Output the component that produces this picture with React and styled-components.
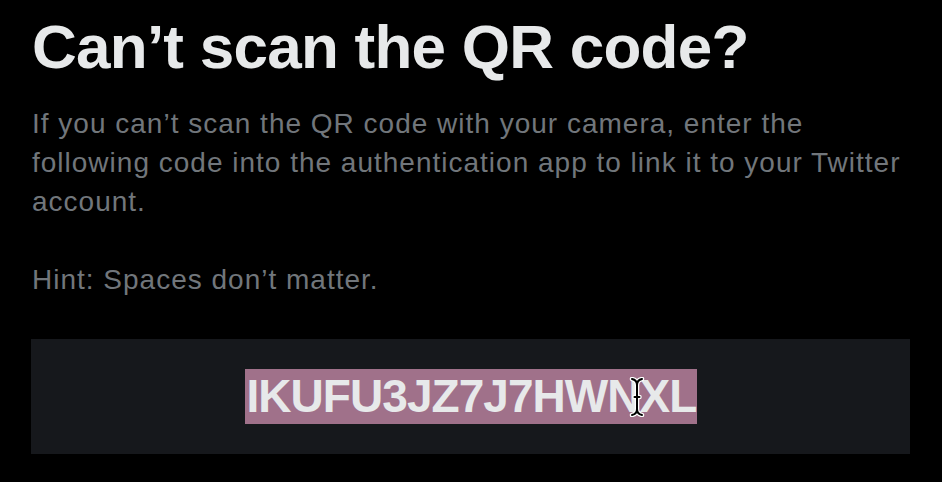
import React from "react";
import styled, { createGlobalStyle } from "styled-components";

const GlobalStyle = createGlobalStyle`
  html, body {
    margin: 0;
    padding: 0;
    background: #000000;
  }
  body {
    font-family: "Liberation Sans", Arial, sans-serif;
  }
`;

const Styled = {
  Page: styled.div`
    width: 942px;
    height: 482px;
    box-sizing: border-box;
    padding: 11px 32px 0 31px;
    background: #000000;
    overflow: hidden;
  `,
  Title: styled.h1`
    margin: 0 0 0 1px;
    font-size: 62px;
    line-height: 72px;
    font-weight: 700;
    letter-spacing: -0.75px;
    color: #e7e9ea;
  `,
  Text: styled.p`
    margin: ${(p) => (p.$first ? "21px" : "39px")} 0 0 1px;
    font-size: 28px;
    line-height: 39px;
    letter-spacing: 1px;
    color: #71767b;
    white-space: nowrap;
  `,
  CodeBox: styled.div`
    margin-top: 40px;
    display: flex;
    justify-content: center;
    align-items: center;
    height: 115px;
    background: #16181c;
  `,
  Code: styled.span`
    position: relative;
    display: inline-block;
    height: 55px;
    line-height: 55px;
    font-size: 46px;
    font-weight: 700;
    letter-spacing: -0.95px;
    padding-left: 2px;
    color: #e7e9ea;
    background: #a0718a;
  `,
  Cursor: styled.svg`
    position: absolute;
    left: 384px;
    top: 8px;
  `,
};

const IBeam = () => (
  <Styled.Cursor width="16" height="40" viewBox="0 0 16 40">
    <g fill="none" strokeLinecap="round" strokeLinejoin="round">
      <path
        d="M3 2 Q8 3 8 8 L8 32 Q8 37 3 38 M13 2 Q8 3 8 8 M8 32 Q8 37 13 38 M5.5 20 L10.5 20"
        stroke="#ffffff"
        strokeWidth="4.5"
      />
      <path
        d="M3 2 Q8 3 8 8 L8 32 Q8 37 3 38 M13 2 Q8 3 8 8 M8 32 Q8 37 13 38 M5.5 20 L10.5 20"
        stroke="#000000"
        strokeWidth="2"
      />
    </g>
  </Styled.Cursor>
);

const App = () => {
  return (
    <>
      <GlobalStyle />
      <Styled.Page>
        <Styled.Title>Can’t scan the QR code?</Styled.Title>
        <Styled.Text $first>
          If you can’t scan the QR code with your camera, enter the
          <br />
          following code into the authentication app to link it to your Twitter
          <br />
          account.
        </Styled.Text>
        <Styled.Text>Hint: Spaces don’t matter.</Styled.Text>
        <Styled.CodeBox>
          <Styled.Code>
            IKUFU3JZ7J7HWNXL
            <IBeam />
          </Styled.Code>
        </Styled.CodeBox>
      </Styled.Page>
    </>
  );
};

export default App;
